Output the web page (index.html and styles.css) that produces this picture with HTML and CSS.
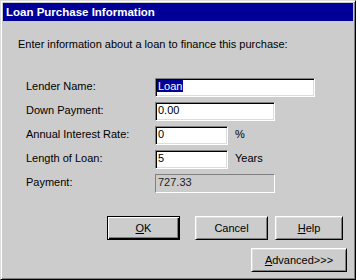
FILE: index.html
```html
<!DOCTYPE html>
<html lang="en">

<head>
  <meta charset="UTF-8">
  <title>Loan Purchase Information</title>
  <link rel="stylesheet" href="styles.css">
</head>

<body>
  <div id="dialog">
    <div class="titleBar">Loan Purchase Information</div>

    <p class="intro">Enter information about a loan to finance this purchase:</p>

    <ul id="loanInfo">
      <li>
        <label for="lender">Lender Name:</label>
        <span class="field wide" id="lender"><span class="selected">Loan</span></span>
      </li>
      <li>
        <label for="down">Down Payment:</label>
        <span class="field mid" id="down">0.00</span>
      </li>
      <li>
        <label for="rate">Annual Interest Rate:</label>
        <span class="field short" id="rate">0</span>
        <span class="unit">%</span>
      </li>
      <li>
        <label for="length">Length of Loan:</label>
        <span class="field short" id="length">5</span>
        <span class="unit">Years</span>
      </li>
      <li>
        <label>Payment:</label>
        <span class="field mid readonly">727.33</span>
      </li>
    </ul>

    <div class="buttons">
      <button class="default"><u>O</u>K</button>
      <button class="cancel">Cancel</button>
      <button class="help"><u>H</u>elp</button>
    </div>
    <div class="buttons advanced">
      <button class="adv"><u>A</u>dvanced&gt;&gt;&gt;</button>
    </div>
  </div>
</body>

</html>
```

FILE: styles.css
```css
body {
  margin: 0;
}
#dialog {
  width: 356px;
  height: 280px;
  box-sizing: border-box;
  padding: 2px;
  background: #cccccc;
  border: 1px solid;
  border-color: #dcdcdc #000 #000 #dcdcdc;
  box-shadow: inset 1px 1px #fff, inset -1px -1px #808080;
  font-family: "Liberation Sans", Arial, sans-serif;
  font-size: 11px;
  color: #000;
}
.titleBar {
  height: 18px;
  line-height: 18px;
  padding-left: 3px;
  background: #000099;
  color: #fff;
  font-weight: bold;
  font-size: 11.5px;
}
.intro {
  margin: 17px 0 0 15px;
  line-height: 13px;
}
#loanInfo {
  margin: 27px 0 0 0;
  padding: 0 0 0 23px;
}
#loanInfo li {
  list-style: none;
  display: flex;
  align-items: center;
  height: 19px;
  margin-bottom: 5px;
}
#loanInfo label {
  width: 129px;
  margin-top: -3px;
}
.field {
  box-sizing: border-box;
  height: 19px;
  line-height: 15px;
  padding-left: 2px;
  background: #fff;
  border: 1px solid;
  border-color: #808080 #fff #fff #808080;
  box-shadow: inset 1px 1px #000, inset -1px -1px #dcdcdc;
}
.wide {
  width: 160px;
}
.mid {
  width: 120px;
}
.short {
  width: 73px;
}
.readonly {
  background: #cccccc;
  box-shadow: none;
  color: #222;
}
.selected {
  background: #000099;
  color: #fff;
  padding: 0 1px;
  margin-left: -1px;
}
.unit {
  margin: -3px 0 0 7px;
}
.buttons {
  display: flex;
  justify-content: flex-end;
  padding-right: 10px;
  margin-top: 23px;
}
button {
  box-sizing: border-box;
  width: 73px;
  height: 24px;
  margin-left: 7px;
  padding: 0;
  font-family: "Liberation Sans", Arial, sans-serif;
  font-size: 11px;
  color: #000;
  background: #cccccc;
  border: 1px solid;
  border-color: #fff #000 #000 #fff;
  box-shadow: inset 1px 1px #dcdcdc, inset -1px -1px #808080;
}
button.default {
  border: 1px solid #000;
  box-shadow: inset 1px 1px #fff, inset -1px -1px #000, inset -2px -2px #808080;
  margin-right: 8px;
}
.help {
  width: 68px;
}
.advanced {
  margin-top: 8px;
  padding-right: 6px;
}
button.adv {
  width: 96px;
}
```
